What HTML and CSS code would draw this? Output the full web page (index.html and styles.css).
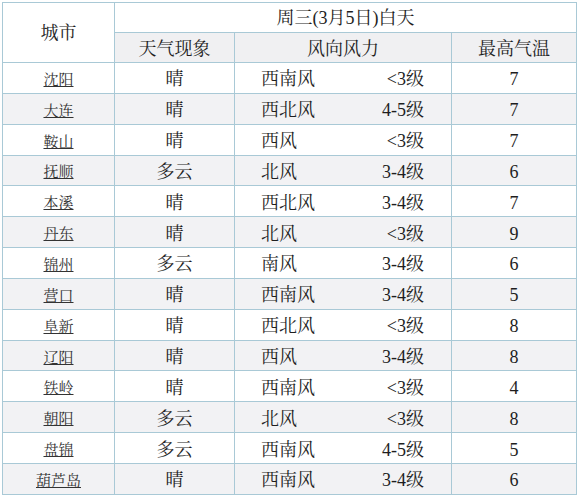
FILE: index.html
```
<!DOCTYPE html>
<html lang="zh">
<head>
<meta charset="utf-8">
<link rel="stylesheet" href="styles.css">
</head>
<body>
<table class="wx">
  <colgroup>
    <col class="c-city"><col class="c-wea"><col class="c-wind"><col class="c-temp">
  </colgroup>
  <thead>
    <tr class="h1">
      <th rowspan="2" class="city-h">城市</th>
      <th colspan="3" class="date-h">周三(3月5日)白天</th>
    </tr>
    <tr class="h2">
      <th>天气现象</th>
      <th>风向风力</th>
      <th>最高气温</th>
    </tr>
  </thead>
  <tbody>
    <tr><td class="city"><a href="#">沈阳</a></td><td>晴</td><td class="wind"><span class="dir">西南风</span><span class="lvl">&lt;3级</span></td><td>7</td></tr>
    <tr><td class="city"><a href="#">大连</a></td><td>晴</td><td class="wind"><span class="dir">西北风</span><span class="lvl">4-5级</span></td><td>7</td></tr>
    <tr><td class="city"><a href="#">鞍山</a></td><td>晴</td><td class="wind"><span class="dir">西风</span><span class="lvl">&lt;3级</span></td><td>7</td></tr>
    <tr><td class="city"><a href="#">抚顺</a></td><td>多云</td><td class="wind"><span class="dir">北风</span><span class="lvl">3-4级</span></td><td>6</td></tr>
    <tr><td class="city"><a href="#">本溪</a></td><td>晴</td><td class="wind"><span class="dir">西北风</span><span class="lvl">3-4级</span></td><td>7</td></tr>
    <tr><td class="city"><a href="#">丹东</a></td><td>晴</td><td class="wind"><span class="dir">北风</span><span class="lvl">&lt;3级</span></td><td>9</td></tr>
    <tr><td class="city"><a href="#">锦州</a></td><td>多云</td><td class="wind"><span class="dir">南风</span><span class="lvl">3-4级</span></td><td>6</td></tr>
    <tr><td class="city"><a href="#">营口</a></td><td>晴</td><td class="wind"><span class="dir">西南风</span><span class="lvl">3-4级</span></td><td>5</td></tr>
    <tr><td class="city"><a href="#">阜新</a></td><td>晴</td><td class="wind"><span class="dir">西北风</span><span class="lvl">&lt;3级</span></td><td>8</td></tr>
    <tr><td class="city"><a href="#">辽阳</a></td><td>晴</td><td class="wind"><span class="dir">西风</span><span class="lvl">3-4级</span></td><td>8</td></tr>
    <tr><td class="city"><a href="#">铁岭</a></td><td>晴</td><td class="wind"><span class="dir">西南风</span><span class="lvl">&lt;3级</span></td><td>4</td></tr>
    <tr><td class="city"><a href="#">朝阳</a></td><td>多云</td><td class="wind"><span class="dir">北风</span><span class="lvl">&lt;3级</span></td><td>8</td></tr>
    <tr><td class="city"><a href="#">盘锦</a></td><td>多云</td><td class="wind"><span class="dir">西南风</span><span class="lvl">4-5级</span></td><td>5</td></tr>
    <tr><td class="city"><a href="#">葫芦岛</a></td><td>晴</td><td class="wind"><span class="dir">西南风</span><span class="lvl">3-4级</span></td><td>6</td></tr>
  </tbody>
</table>
</body>
</html>
```
FILE: styles.css
```
html, body {
  margin: 0;
  padding: 0;
  background: #ffffff;
}
body {
  padding: 2px 0 0 2px;
  font-family: "Liberation Serif", "Noto Serif CJK SC", "Noto Sans CJK SC", serif;
  color: #1e1e1e;
}
.wx {
  border-collapse: collapse;
  table-layout: fixed;
  width: 574px;
  font-size: 18px;
}
.c-city { width: 112px; }
.c-wea { width: 120px; }
.c-wind { width: 217px; }
.c-temp { width: 125px; }
.wx th,
.wx td {
  border: 1px solid #a9c9d6;
  padding: 0;
  text-align: center;
  font-weight: normal;
  line-height: 20px;
}
.wx thead tr { height: 30px; }
.wx tbody tr { height: 30.85px; }
.h1 th { background: #ffffff; }
.h2 th { background: #f0f0f2; padding-top: 2px; }
.city-h { background: #ffffff; }
.wx tbody tr:nth-child(even) td { background: #f2f2f4; }
.wx td { padding-top: 3px; }
.city a {
  color: #333333;
  font-size: 15px;
  text-decoration: underline;
}
.wx td.wind {
  padding-left: 26px;
  padding-right: 27px;
}
.wind .dir { float: left; }
.wind .lvl { float: right; }
.wind::after {
  content: "";
  display: block;
  clear: both;
}
```
